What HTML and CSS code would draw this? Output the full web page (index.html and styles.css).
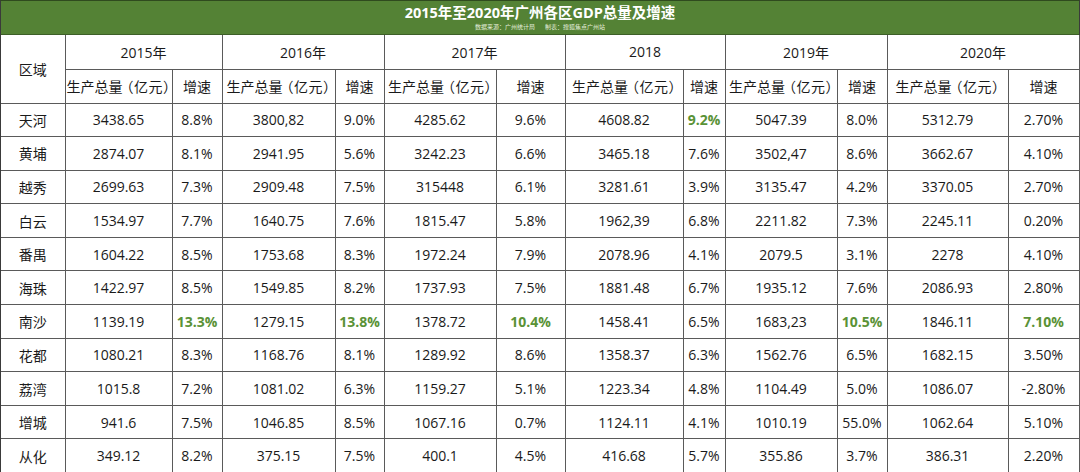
FILE: index.html
```html
<!DOCTYPE html>
<html lang="zh-CN">
<head>
<meta charset="utf-8">
<title>2015年至2020年广州各区GDP总量及增速</title>
<link rel="stylesheet" href="styles.css">
</head>
<body>
<div class="sheet">
  <div class="title-bar">
    <div class="title">2015年至2020年广州各区GDP总量及增速</div>
    <div class="subtitle">数据来源：广州统计局<span class="gap"></span>制表：搜狐焦点广州站</div>
  </div>
  <table class="gdp">
    <colgroup>
      <col class="c-area">
      <col class="c-a1"><col class="c-b1">
      <col class="c-a2"><col class="c-b2">
      <col class="c-a3"><col class="c-b3">
      <col class="c-a4"><col class="c-b4">
      <col class="c-a5"><col class="c-b5">
      <col class="c-a6"><col class="c-b6">
    </colgroup>
    <thead>
      <tr class="hrow">
        <th rowspan="2">区域</th>
        <th colspan="2">2015年</th>
        <th colspan="2">2016年</th>
        <th colspan="2">2017年</th>
        <th colspan="2">2018</th>
        <th colspan="2">2019年</th>
        <th colspan="2">2020年</th>
      </tr>
      <tr class="hrow">
        <th>生产总量<span class="unit">（亿元）</span></th><th>增速</th>
        <th>生产总量<span class="unit">（亿元）</span></th><th>增速</th>
        <th>生产总量<span class="unit">（亿元）</span></th><th>增速</th>
        <th>生产总量<span class="unit">（亿元）</span></th><th>增速</th>
        <th>生产总量<span class="unit">（亿元）</span></th><th>增速</th>
        <th>生产总量<span class="unit">（亿元）</span></th><th>增速</th>
      </tr>
    </thead>
    <tbody>
      <tr><td>天河</td><td>3438.65</td><td>8.8%</td><td>3800,82</td><td>9.0%</td><td>4285.62</td><td>9.6%</td><td>4608.82</td><td class="hi">9.2%</td><td>5047.39</td><td>8.0%</td><td>5312.79</td><td>2.70%</td></tr>
      <tr><td>黄埔</td><td>2874.07</td><td>8.1%</td><td>2941.95</td><td>5.6%</td><td>3242.23</td><td>6.6%</td><td>3465.18</td><td>7.6%</td><td>3502,47</td><td>8.6%</td><td>3662.67</td><td>4.10%</td></tr>
      <tr><td>越秀</td><td>2699.63</td><td>7.3%</td><td>2909.48</td><td>7.5%</td><td>315448</td><td>6.1%</td><td>3281.61</td><td>3.9%</td><td>3135.47</td><td>4.2%</td><td>3370.05</td><td>2.70%</td></tr>
      <tr><td>白云</td><td>1534.97</td><td>7.7%</td><td>1640.75</td><td>7.6%</td><td>1815.47</td><td>5.8%</td><td>1962,39</td><td>6.8%</td><td>2211.82</td><td>7.3%</td><td>2245.11</td><td>0.20%</td></tr>
      <tr><td>番禺</td><td>1604.22</td><td>8.5%</td><td>1753.68</td><td>8.3%</td><td>1972.24</td><td>7.9%</td><td>2078.96</td><td>4.1%</td><td>2079.5</td><td>3.1%</td><td>2278</td><td>4.10%</td></tr>
      <tr><td>海珠</td><td>1422.97</td><td>8.5%</td><td>1549.85</td><td>8.2%</td><td>1737.93</td><td>7.5%</td><td>1881.48</td><td>6.7%</td><td>1935.12</td><td>7.6%</td><td>2086.93</td><td>2.80%</td></tr>
      <tr><td>南沙</td><td>1139.19</td><td class="hi">13.3%</td><td>1279.15</td><td class="hi">13.8%</td><td>1378.72</td><td class="hi">10.4%</td><td>1458.41</td><td>6.5%</td><td>1683,23</td><td class="hi">10.5%</td><td>1846.11</td><td class="hi">7.10%</td></tr>
      <tr><td>花都</td><td>1080.21</td><td>8.3%</td><td>1168.76</td><td>8.1%</td><td>1289.92</td><td>8.6%</td><td>1358.37</td><td>6.3%</td><td>1562.76</td><td>6.5%</td><td>1682.15</td><td>3.50%</td></tr>
      <tr><td>荔湾</td><td>1015.8</td><td>7.2%</td><td>1081.02</td><td>6.3%</td><td>1159.27</td><td>5.1%</td><td>1223.34</td><td>4.8%</td><td>1104.49</td><td>5.0%</td><td>1086.07</td><td>-2.80%</td></tr>
      <tr><td>增城</td><td>941.6</td><td>7.5%</td><td>1046.85</td><td>8.5%</td><td>1067.16</td><td>0.7%</td><td>1124.11</td><td>4.1%</td><td>1010.19</td><td>55.0%</td><td>1062.64</td><td>5.10%</td></tr>
      <tr><td>从化</td><td>349.12</td><td>8.2%</td><td>375.15</td><td>7.5%</td><td>400.1</td><td>4.5%</td><td>416.68</td><td>5.7%</td><td>355.86</td><td>3.7%</td><td>386.31</td><td>2.20%</td></tr>
    </tbody>
  </table>
</div>
</body>
</html>
```
FILE: styles.css
```css
html, body {
  margin: 0;
  padding: 0;
  background: #ffffff;
}

body {
  font-family: "Open Sans", "Noto Sans CJK SC", sans-serif;
  color: #1a1a1a;
}

.sheet {
  width: 1078px;
  border-left: 1px solid #3a3a3a;
  border-right: 1px solid #3a3a3a;
  border-top: 1px solid #2f4a1e;
}

.title-bar {
  height: 33px;
  background: #548235;
  border-bottom: 1px solid #3d5f27;
  display: flex;
  flex-direction: column;
  align-items: center;
  color: #ffffff;
}

.title {
  font-size: 14.5px;
  font-weight: 700;
  line-height: 18px;
  margin-top: 3px;
}

.subtitle {
  font-size: 6px;
  line-height: 8px;
  margin-top: 1px;
  color: #e4eedc;
}

.subtitle .gap {
  display: inline-block;
  width: 10px;
}

.gdp {
  width: 1078px;
  border-collapse: collapse;
  table-layout: fixed;
}

.gdp th,
.gdp td {
  border: 1px solid #5a5a5a;
  padding: 0;
  text-align: center;
  vertical-align: middle;
  font-size: 14px;
  font-weight: 400;
  white-space: nowrap;
  overflow: hidden;
}

.gdp thead tr:first-child th {
  border-top: none;
}

.gdp th:first-child,
.gdp td:first-child {
  border-left: none;
}

.gdp .unit {
  font-feature-settings: "halt";
  margin-left: 4px;
  letter-spacing: 0.5px;
}

.gdp .hrow {
  height: 34px;
}

.gdp tbody tr {
  height: 33.6px;
}

.gdp .hi {
  color: #5a9236;
  font-weight: 700;
}

.c-area { width: 64px; }
.c-a1 { width: 107px; }
.c-b1 { width: 50px; }
.c-a2 { width: 113px; }
.c-b2 { width: 49px; }
.c-a3 { width: 112px; }
.c-b3 { width: 69px; }
.c-a4 { width: 118px; }
.c-b4 { width: 42px; }
.c-a5 { width: 112px; }
.c-b5 { width: 50px; }
.c-a6 { width: 121px; }
.c-b6 { width: 71px; }
```
